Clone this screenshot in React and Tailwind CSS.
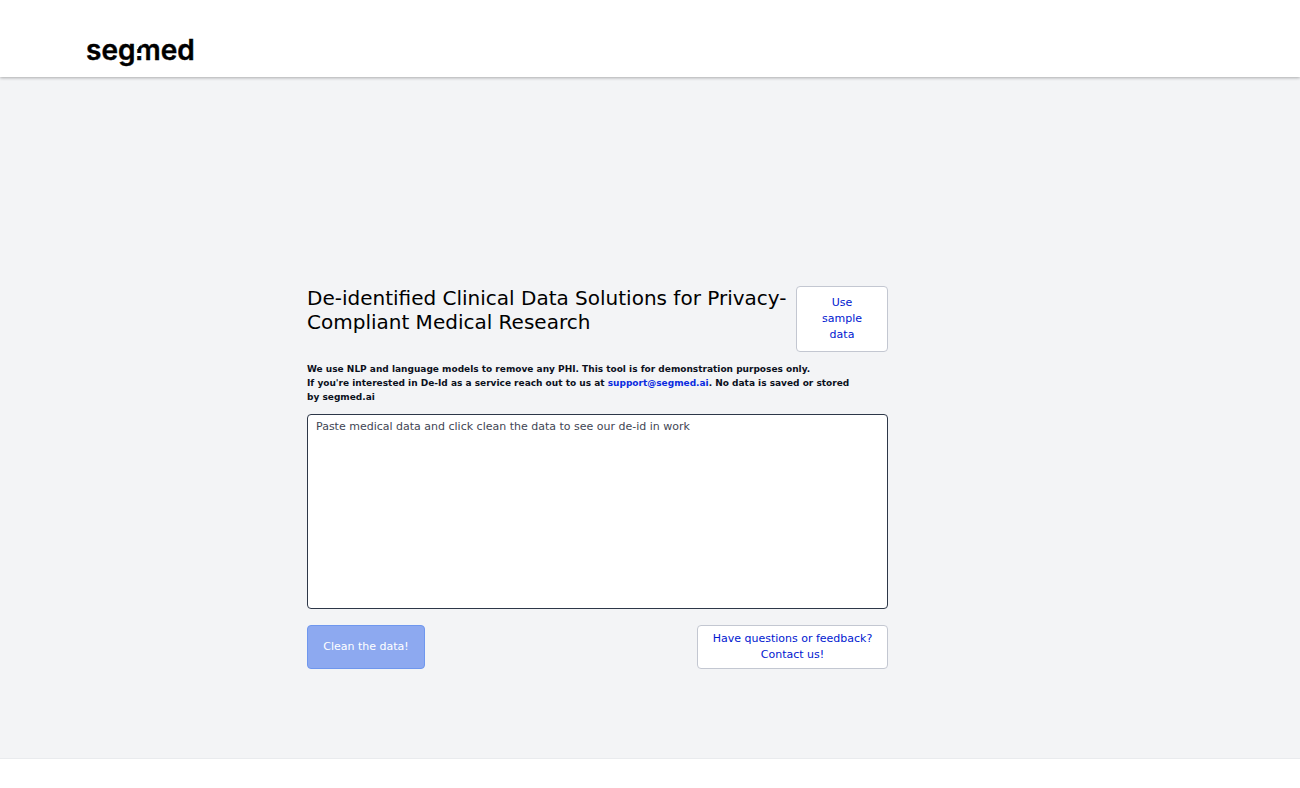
import { useState } from "react";

const SAMPLE_TEXT =
  "Patient John Doe, DOB 01/02/1960, was seen on 03/04/2021 for a chest CT.";

function Logo() {
  return (
    <svg width="112" height="44" viewBox="0 0 112 44" role="img" aria-label="segmed">
      <text
        x="0"
        y="27"
        fill="#000"
        stroke="#000"
        strokeWidth="0.4"
        fontFamily='Inter, "Liberation Sans", sans-serif'
        fontSize="28"
        fontWeight="600"
      >
        segmed
      </text>
      {/* the m stands on a dot instead of a full left stem */}
      <path d="M50.500 10h5v2c-1.800.6-3 2-3.500 4h-1.500z" fill="#fff" />
      <rect x="50.500" y="20" width="5.300" height="3" fill="#fff" />
    </svg>
  );
}

function OutlineButton({ className = "", children, ...props }) {
  return (
    <button
      type="button"
      className={`rounded border border-[#c3c7d1] bg-white text-[11px] leading-4 text-[#0018d0] hover:bg-gray-50 ${className}`}
      {...props}
    >
      {children}
    </button>
  );
}

export default function App() {
  const [text, setText] = useState("");

  return (
    <div className="min-h-screen bg-white font-['DejaVu_Sans',sans-serif] text-black">
      {/* Header */}
      <header className="relative flex h-[77px] items-end bg-white px-[86px] shadow-[0_1px_3px_rgba(0,0,0,0.3)]">
        <a href="/">
          <Logo />
        </a>
      </header>

      {/* De-id tool */}
      <main className="border-b border-[#e9ebee] bg-[#f3f4f6] pt-[209px] pr-[105px] pb-[89px]">
        <div className="mx-auto max-w-[581px]">
          <div className="flex items-start justify-between">
            <h1 className="flex-1 text-[20px] leading-6">
              De-identified Clinical Data Solutions for Privacy-Compliant Medical Research
            </h1>
            <OutlineButton
              className="w-[92px] px-4 py-2"
              onClick={() => setText(SAMPLE_TEXT)}
            >
              Use sample data
            </OutlineButton>
          </div>

          <p className="mt-[10px] text-[9px] leading-[14px] font-bold text-[#0b101c]">
            We use NLP and language models to remove any PHI. This tool is for demonstration purposes only.
            <br />
            If you're interested in De-Id as a service reach out to us at{" "}
            <a href="mailto:support@segmed.ai" className="text-[#0a2be0] hover:underline">
              support@segmed.ai
            </a>
            . No data is saved or stored by&nbsp;segmed.ai
          </p>

          <textarea
            aria-label="Medical data"
            value={text}
            onChange={(e) => setText(e.target.value)}
            placeholder="Paste medical data and click clean the data to see our de-id in work"
            className="mt-[10px] block h-[195px] w-full resize-none rounded-sm border border-[#2d3748] bg-white px-2 py-1 text-[11px] leading-4 placeholder:text-[#3f4654]"
          />

          <div className="mt-4 flex items-stretch justify-between">
            <button
              type="button"
              className="w-[118px] rounded border border-[#6f97ee] bg-[#8da9f0] text-[11px] leading-4 text-white"
            >
              Clean the data!
            </button>
            <OutlineButton className="w-[191px] px-3 py-[5px]">
              Have questions or feedback? Contact us!
            </OutlineButton>
          </div>
        </div>
      </main>
    </div>
  );
}
